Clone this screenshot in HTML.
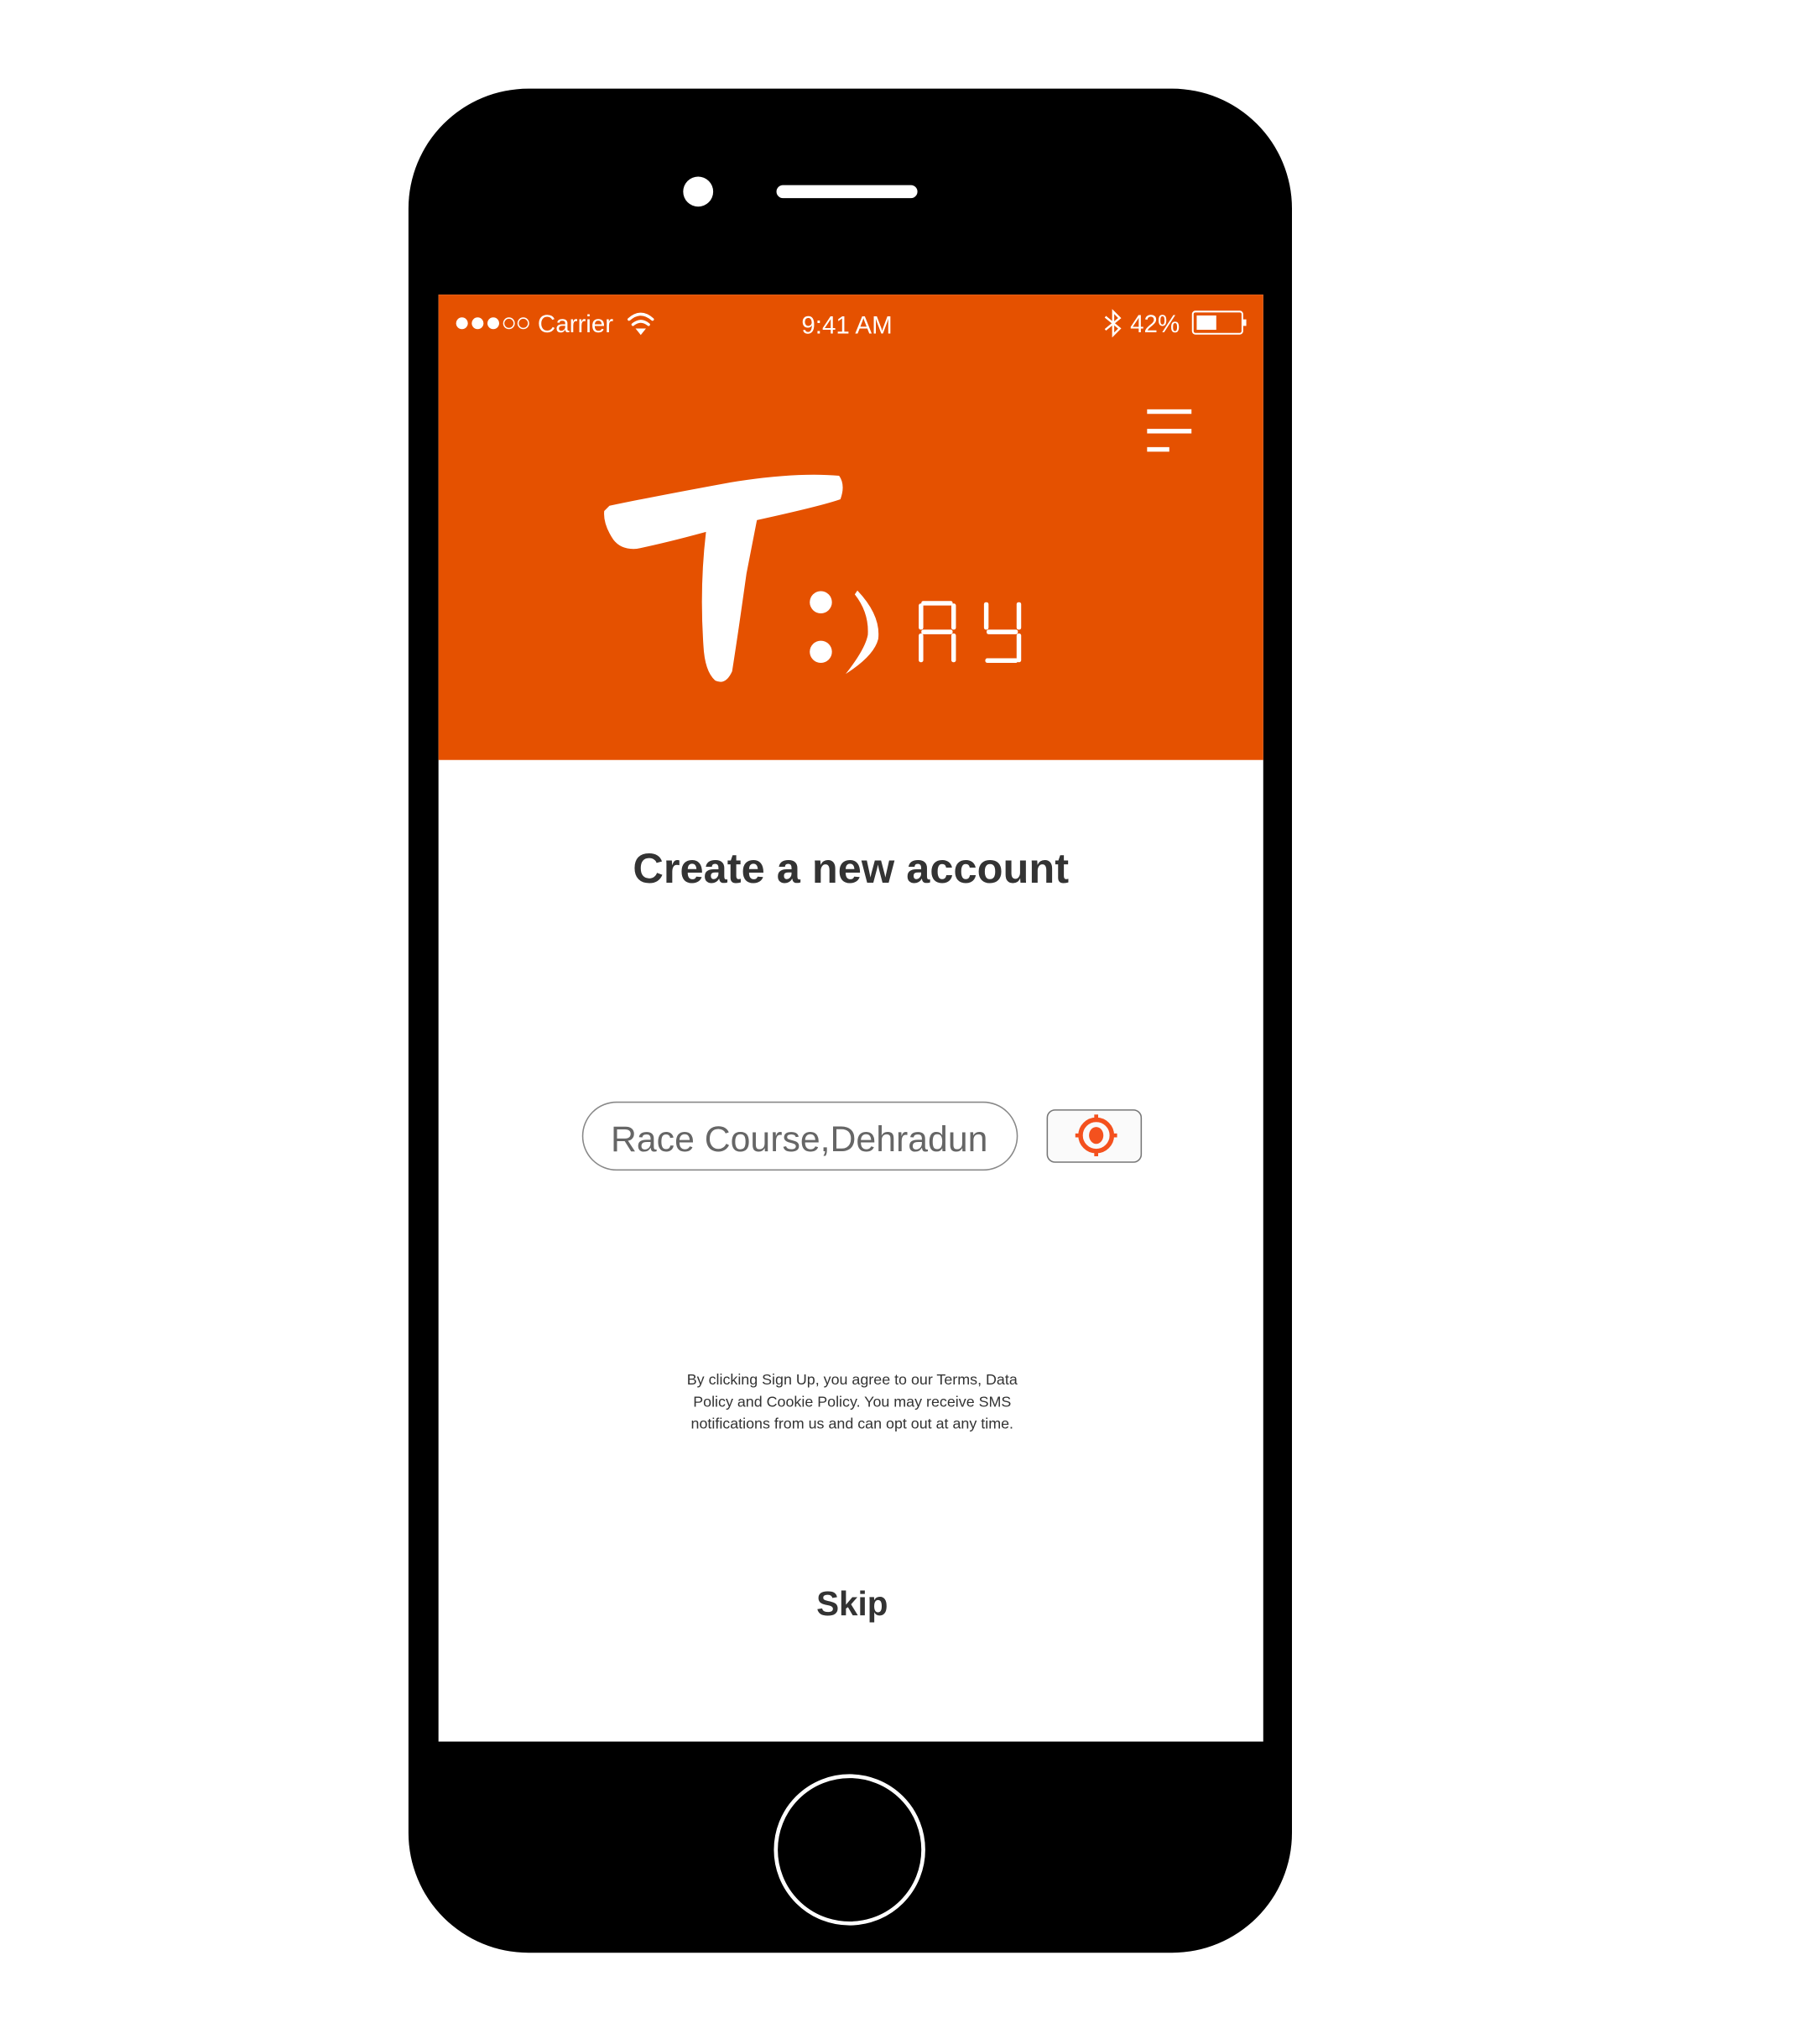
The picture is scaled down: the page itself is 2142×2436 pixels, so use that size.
<!DOCTYPE html>
<html><head><meta charset="utf-8"><style>
html,body{margin:0;padding:0;background:#fff;width:2142px;height:2436px;overflow:hidden}
svg{display:block}
</style></head><body>
<svg width="2142" height="2436" viewBox="0 0 1377 1568" preserveAspectRatio="none" font-family="'Liberation Sans','DejaVu Sans',sans-serif">
<rect x="0" y="0" width="1377" height="1568" fill="#fff"/>
<rect x="313" y="68" width="677" height="1430" rx="92" ry="92" fill="#000"/>
<circle cx="535" cy="147" r="11.5" fill="#fff"/>
<rect x="595" y="142" width="108" height="10" rx="5" fill="#fff"/>
<rect x="336" y="226" width="632" height="1110" fill="#fff"/>
<rect x="336" y="226" width="632" height="357" fill="#E55100"/>
<g fill="#fff">
<circle cx="354" cy="248" r="4.5"/><circle cx="366" cy="248" r="4.5"/><circle cx="378" cy="248" r="4.5"/>
<circle cx="390" cy="248" r="4" fill="none" stroke="#fff" stroke-width="1"/><circle cx="401" cy="248" r="4" fill="none" stroke="#fff" stroke-width="1"/>
<text x="412" y="255" font-size="19">Carrier</text>
<text x="649" y="256" font-size="19" text-anchor="middle">9:41 AM</text>
<text x="866" y="255" font-size="19">42%</text>
</g>
<g fill="none" stroke="#fff" stroke-width="2.2" stroke-linecap="round">
<path d="M482 245 Q491 237 500 245"/><path d="M485 249 Q491 244 497 249"/>
</g>
<path d="M487 252 L495 252 L491 257 Z" fill="#fff"/>
<path d="M847 243 L858 252 L853 257 L853 239 L858 244 L847 253" fill="none" stroke="#fff" stroke-width="1.6"/>
<rect x="914" y="239" width="38" height="17" rx="2" fill="none" stroke="#fff" stroke-width="1.3"/>
<rect x="917" y="242" width="15" height="11" fill="#fff"/>
<rect x="952" y="245" width="3" height="5" fill="#fff"/>
<g fill="#fff"><rect x="879" y="314" width="34" height="3.5"/><rect x="879" y="329" width="34" height="3.5"/><rect x="879" y="343" width="17" height="3.5"/></g>
<g fill="#fff">
<path d="M467 388 Q500 381 560 370 Q610 362 643 365 Q648 372 644 383 Q630 388 580 399 L572 440 Q565 490 561 515 Q556 526 548 522 Q540 515 539 495 Q536 450 541 408 Q512 416 488 421 Q476 422 470 414 Q462 402 463 392 Z"/>
<circle cx="629" cy="462" r="8.5"/><circle cx="629" cy="500" r="8.5"/>
<path d="M657 453 Q675 472 673 490 Q670 503 648 517 Q663 498 665 487 Q666 470 655 456 Z"/>
<g>
<rect x="706" y="461" width="24" height="3.5" rx="1.5"/>
<rect x="704" y="463" width="3.5" height="20" rx="1.5"/><rect x="729" y="463" width="3.5" height="20" rx="1.5"/>
<rect x="706" y="483" width="24" height="3.5" rx="1.5"/>
<rect x="704" y="486" width="3.5" height="22" rx="1.5"/><rect x="729" y="486" width="3.5" height="22" rx="1.5"/>
<rect x="754" y="462" width="3.5" height="21" rx="1.5"/><rect x="779" y="462" width="3.5" height="21" rx="1.5"/>
<rect x="756" y="483" width="24" height="3.5" rx="1.5"/>
<rect x="779" y="486" width="3.5" height="22" rx="1.5"/>
<rect x="755" y="505" width="25" height="3.5" rx="1.5"/>
</g>
</g>
<text x="652" y="677" font-size="32.5" font-weight="bold" fill="#333" text-anchor="middle">Create a new account</text>
<rect x="446.5" y="845.5" width="333" height="52" rx="26" fill="#fff" stroke="#888" stroke-width="1"/>
<text x="468" y="883" font-size="27.5" fill="#666">Race Course,Dehradun</text>
<rect x="802.5" y="851.5" width="72" height="40" rx="6" fill="#fafafa" stroke="#777" stroke-width="1"/>
<circle cx="840" cy="871" r="12" fill="none" stroke="#F4511E" stroke-width="3.5"/>
<ellipse cx="840" cy="871" rx="5.5" ry="6.5" fill="#F4511E"/>
<g stroke="#F4511E" stroke-width="3"><path d="M840 855 V860"/><path d="M840 882 V887"/><path d="M824 871 H829"/><path d="M851 871 H856"/></g>
<g font-size="11.5" fill="#333" text-anchor="middle">
<text x="653" y="1062">By clicking Sign Up, you agree to our Terms, Data</text>
<text x="653" y="1079">Policy and Cookie Policy. You may receive SMS</text>
<text x="653" y="1096">notifications from us and can opt out at any time.</text>
</g>
<text x="653" y="1239" font-size="26" font-weight="bold" fill="#333" text-anchor="middle">Skip</text>
<circle cx="651" cy="1419" r="56.5" fill="none" stroke="#fff" stroke-width="3"/>
</svg>
</body></html>
